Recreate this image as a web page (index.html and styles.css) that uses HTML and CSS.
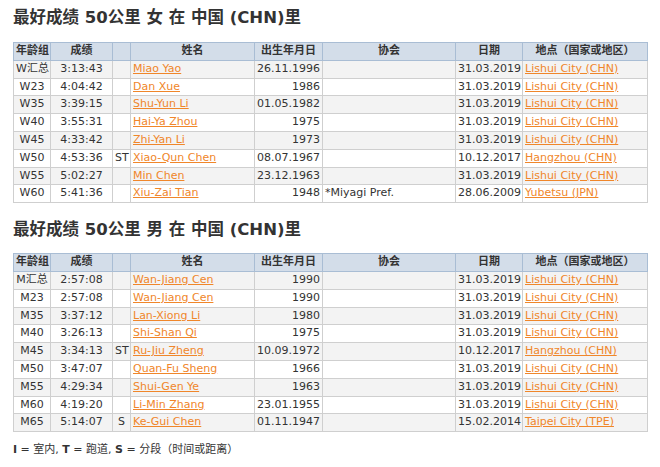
FILE: index.html
```html
<!DOCTYPE html>
<html lang="zh">
<head>
<meta charset="utf-8">
<title>最好成绩 50公里</title>
<link rel="stylesheet" href="styles.css">
</head>
<body>
<h2 class="title first">最好成绩 50公里 女 在 中国 (CHN)里</h2>
<table class="records">
  <colgroup>
    <col class="c-age"><col class="c-perf"><col class="c-flag"><col class="c-name"><col class="c-birth"><col class="c-club"><col class="c-date"><col class="c-place">
  </colgroup>
  <thead>
    <tr><th>年龄组</th><th>成绩</th><th></th><th>姓名</th><th>出生年月日</th><th>协会</th><th>日期</th><th>地点（国家或地区）</th></tr>
  </thead>
  <tbody>
    <tr><td class="ctr">W汇总</td><td class="ctr">3:13:43</td><td class="ctr"></td><td><a href="#">Miao Yao</a></td><td class="rgt">26.11.1996</td><td></td><td class="rgt">31.03.2019</td><td><a href="#">Lishui City (CHN)</a></td></tr>
    <tr><td class="ctr">W23</td><td class="ctr">4:04:42</td><td class="ctr"></td><td><a href="#">Dan Xue</a></td><td class="rgt">1986</td><td></td><td class="rgt">31.03.2019</td><td><a href="#">Lishui City (CHN)</a></td></tr>
    <tr><td class="ctr">W35</td><td class="ctr">3:39:15</td><td class="ctr"></td><td><a href="#">Shu-Yun Li</a></td><td class="rgt">01.05.1982</td><td></td><td class="rgt">31.03.2019</td><td><a href="#">Lishui City (CHN)</a></td></tr>
    <tr><td class="ctr">W40</td><td class="ctr">3:55:31</td><td class="ctr"></td><td><a href="#">Hai-Ya Zhou</a></td><td class="rgt">1975</td><td></td><td class="rgt">31.03.2019</td><td><a href="#">Lishui City (CHN)</a></td></tr>
    <tr><td class="ctr">W45</td><td class="ctr">4:33:42</td><td class="ctr"></td><td><a href="#">Zhi-Yan Li</a></td><td class="rgt">1973</td><td></td><td class="rgt">31.03.2019</td><td><a href="#">Lishui City (CHN)</a></td></tr>
    <tr><td class="ctr">W50</td><td class="ctr">4:53:36</td><td class="ctr">ST</td><td><a href="#">Xiao-Qun Chen</a></td><td class="rgt">08.07.1967</td><td></td><td class="rgt">10.12.2017</td><td><a href="#">Hangzhou (CHN)</a></td></tr>
    <tr><td class="ctr">W55</td><td class="ctr">5:02:27</td><td class="ctr"></td><td><a href="#">Min Chen</a></td><td class="rgt">23.12.1963</td><td></td><td class="rgt">31.03.2019</td><td><a href="#">Lishui City (CHN)</a></td></tr>
    <tr><td class="ctr">W60</td><td class="ctr">5:41:36</td><td class="ctr"></td><td><a href="#">Xiu-Zai Tian</a></td><td class="rgt">1948</td><td>*Miyagi Pref.</td><td class="rgt">28.06.2009</td><td><a href="#">Yubetsu (JPN)</a></td></tr>
  </tbody>
</table>

<h2 class="title second">最好成绩 50公里 男 在 中国 (CHN)里</h2>
<table class="records">
  <colgroup>
    <col class="c-age"><col class="c-perf"><col class="c-flag"><col class="c-name"><col class="c-birth"><col class="c-club"><col class="c-date"><col class="c-place">
  </colgroup>
  <thead>
    <tr><th>年龄组</th><th>成绩</th><th></th><th>姓名</th><th>出生年月日</th><th>协会</th><th>日期</th><th>地点（国家或地区）</th></tr>
  </thead>
  <tbody>
    <tr><td class="ctr">M汇总</td><td class="ctr">2:57:08</td><td class="ctr"></td><td><a href="#">Wan-Jiang Cen</a></td><td class="rgt">1990</td><td></td><td class="rgt">31.03.2019</td><td><a href="#">Lishui City (CHN)</a></td></tr>
    <tr><td class="ctr">M23</td><td class="ctr">2:57:08</td><td class="ctr"></td><td><a href="#">Wan-Jiang Cen</a></td><td class="rgt">1990</td><td></td><td class="rgt">31.03.2019</td><td><a href="#">Lishui City (CHN)</a></td></tr>
    <tr><td class="ctr">M35</td><td class="ctr">3:37:12</td><td class="ctr"></td><td><a href="#">Lan-Xiong Li</a></td><td class="rgt">1980</td><td></td><td class="rgt">31.03.2019</td><td><a href="#">Lishui City (CHN)</a></td></tr>
    <tr><td class="ctr">M40</td><td class="ctr">3:26:13</td><td class="ctr"></td><td><a href="#">Shi-Shan Qi</a></td><td class="rgt">1975</td><td></td><td class="rgt">31.03.2019</td><td><a href="#">Lishui City (CHN)</a></td></tr>
    <tr><td class="ctr">M45</td><td class="ctr">3:34:13</td><td class="ctr">ST</td><td><a href="#">Ru-Jiu Zheng</a></td><td class="rgt">10.09.1972</td><td></td><td class="rgt">10.12.2017</td><td><a href="#">Hangzhou (CHN)</a></td></tr>
    <tr><td class="ctr">M50</td><td class="ctr">3:47:07</td><td class="ctr"></td><td><a href="#">Quan-Fu Sheng</a></td><td class="rgt">1966</td><td></td><td class="rgt">31.03.2019</td><td><a href="#">Lishui City (CHN)</a></td></tr>
    <tr><td class="ctr">M55</td><td class="ctr">4:29:34</td><td class="ctr"></td><td><a href="#">Shui-Gen Ye</a></td><td class="rgt">1963</td><td></td><td class="rgt">31.03.2019</td><td><a href="#">Lishui City (CHN)</a></td></tr>
    <tr><td class="ctr">M60</td><td class="ctr">4:19:20</td><td class="ctr"></td><td><a href="#">Li-Min Zhang</a></td><td class="rgt">23.01.1955</td><td></td><td class="rgt">31.03.2019</td><td><a href="#">Lishui City (CHN)</a></td></tr>
    <tr><td class="ctr">M65</td><td class="ctr">5:14:07</td><td class="ctr">S</td><td><a href="#">Ke-Gui Chen</a></td><td class="rgt">01.11.1947</td><td></td><td class="rgt">15.02.2014</td><td><a href="#">Taipei City (TPE)</a></td></tr>
  </tbody>
</table>

<p class="legend"><b>I</b> = 室内, <b>T</b> = 跑道, <b>S</b> = 分段（时间或距离）</p>
</body>
</html>
```

FILE: styles.css
```css
html, body {
  margin: 0;
  padding: 0;
  background: #ffffff;
}

body {
  padding: 0 13px;
  font-family: "DejaVu Sans", "Noto Sans CJK SC", sans-serif;
  font-size: 11px;
  color: #333333;
}

.title {
  font-size: 16.5px;
  font-weight: bold;
  line-height: 24px;
  color: #333333;
  margin: 0;
}

.title.first {
  padding-top: 6px;
  margin-bottom: 12px;
}

.title.second {
  margin-top: 15px;
  margin-bottom: 11px;
}

.records {
  width: 634px;
  border-collapse: collapse;
  table-layout: fixed;
  border: 1px solid #c8c8c8;
}

.c-age { width: 37px; }
.c-perf { width: 62px; }
.c-flag { width: 18px; }
.c-name { width: 124px; }
.c-birth { width: 68px; }
.c-club { width: 133px; }
.c-date { width: 67px; }
.c-place { width: 125px; }

.records th,
.records td {
  padding: 2px 2px;
  line-height: 12.8px;
  height: 12.8px;
  white-space: nowrap;
  overflow: hidden;
}

.records th {
  background: #d3dde9;
  border: 1px solid #a9bdd4;
  font-weight: bold;
  text-align: center;
  color: #333333;
}

.records td {
  border: 1px solid #cfcfcf;
  text-align: left;
}

.records tbody tr:nth-child(odd) td {
  background: #f3f3f3;
}

.records tbody tr:nth-child(even) td {
  background: #ffffff;
}

.records td.ctr { text-align: center; }
.records td.rgt { text-align: right; }

.records a {
  color: #f0862a;
  text-decoration: underline;
}

.legend {
  margin: 10px 0 0;
  font-size: 11px;
  line-height: 16px;
  color: #333333;
}

.legend b {
  font-weight: bold;
}
```
